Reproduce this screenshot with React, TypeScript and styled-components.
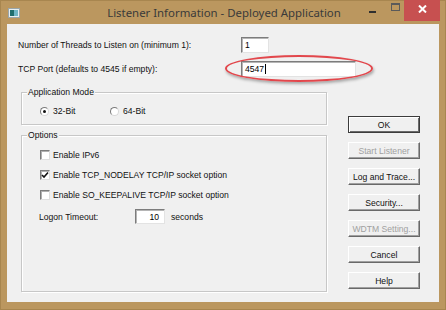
import React from "react";
import styled, { createGlobalStyle, css } from "styled-components";

const Global = createGlobalStyle`
  html, body { margin: 0; padding: 0; background: #bb975f; }
  body { width: 446px; height: 310px; overflow: hidden; }
`;

const Window = styled.div`
  box-sizing: border-box;
  width: 446px;
  height: 310px;
  background: #bb975f;
  border: 1px solid #a8864f;
  display: flex;
  flex-direction: column;
  font-family: "Liberation Sans", Arial, sans-serif;
`;

const TitleBar = styled.div`
  height: 23px;
  display: grid;
  grid-template-columns: 1fr auto 1fr;
  align-items: start;
  padding: 0 5px 0 7px;
`;

const AppIcon = styled.svg`
  margin-top: 7px;
  display: block;
`;

const Title = styled.div`
  font-family: "Noto Sans", "Liberation Sans", sans-serif;
  font-size: 11.4px;
  line-height: 24px;
  color: #3a3a3a;
  white-space: nowrap;
`;

const Controls = styled.div`
  display: flex;
  justify-content: flex-end;
`;

const CtrlButton = styled.div<{ $w: number; $close?: boolean }>`
  width: ${(p) => p.$w}px;
  height: 20px;
  display: flex;
  align-items: center;
  justify-content: center;
  ${(p) =>
    p.$close &&
    css`
      background: #c75050;
      margin-top: -1px;
      height: 21px;
    `}
`;

const MinGlyph = styled.span`
  width: 7px;
  height: 2px;
  background: #2f2f2f;
  margin-top: 2px;
`;

const MaxGlyph = styled.span`
  box-sizing: border-box;
  width: 9px;
  height: 8px;
  border: 1px solid #5a5a5a;
  border-top-width: 2px;
  margin-top: -8px;
`;

const Client = styled.div`
  flex: 1;
  margin: 0 6px 7px;
  background: #f0f0f0;
  color: #111;
  font-size: 8.6px;
  display: flex;
  flex-direction: column;
`;

const TopForm = styled.div`
  display: grid;
  grid-template-columns: 223px auto;
  grid-auto-rows: 16px;
  row-gap: 8px;
  padding: 13px 0 0 11px;
  align-items: center;
`;

const Label = styled.span`
  white-space: nowrap;
`;

const Field = styled.div<{ $w: number; $h?: number; $right?: boolean }>`
  box-sizing: border-box;
  position: relative;
  width: ${(p) => p.$w}px;
  height: ${(p) => p.$h ?? 16}px;
  background: #fff;
  border: 1px solid;
  border-color: #7c7c7c #e3e3e3 #e3e3e3 #7c7c7c;
  box-shadow: inset 1px 1px 0 #b5b5b5;
  display: flex;
  align-items: center;
  justify-content: ${(p) => (p.$right ? "flex-end" : "flex-start")};
  padding: ${(p) => (p.$right ? "0 5px 0 0" : "0 0 0 3px")};
  color: #000;
`;

const Caret = styled.span`
  width: 1px;
  height: 10px;
  background: #000;
  margin-left: 0.5px;
`;

const Highlight = styled.span`
  position: absolute;
  left: -17px;
  top: -7px;
  width: 148px;
  height: 27px;
  box-sizing: border-box;
  border: 2.5px solid #e2474c;
  border-radius: 50%;
  box-shadow: 1px 2px 3px rgba(0, 0, 0, 0.3);
  pointer-events: none;
`;

const Lower = styled.div`
  display: flex;
  align-items: flex-start;
  gap: 21px;
  margin-top: 10px;
  padding-left: 14px;
`;

const LeftCol = styled.div`
  display: flex;
  flex-direction: column;
  gap: 5px;
  width: 306px;
`;

const Group = styled.fieldset`
  box-sizing: border-box;
  margin: 0;
  padding: 0;
  min-inline-size: 0;
  width: 306px;
  border: 1px solid #c7c7c7;
  box-shadow: inset 1px 1px 0 #fff, 1px 1px 0 #fff;
`;

const GroupTitle = styled.legend`
  font-size: 8.6px;
  line-height: 11px;
  padding: 0 1px;
  margin-left: 5px;
  background: #f0f0f0;
`;

const GroupBody = styled.div<{ $pt: number; $pb: number }>`
  display: flex;
  flex-direction: column;
  gap: 8px;
  padding: ${(p) => `${p.$pt}px 0 ${p.$pb}px 18px`};
`;

const RadioRow = styled.div`
  display: grid;
  grid-template-columns: 70px 70px;
  height: 10px;
  align-items: center;
`;

const Choice = styled.label<{ $gap: number }>`
  display: flex;
  align-items: center;
  gap: ${(p) => p.$gap}px;
  height: 12px;
  white-space: nowrap;
`;

const RadioDot = styled.span<{ $on?: boolean }>`
  box-sizing: border-box;
  width: 9px;
  height: 9px;
  border-radius: 50%;
  border: 1px solid;
  border-color: #7a7a7a #d8d8d8 #d8d8d8 #7a7a7a;
  background: #fff;
  display: flex;
  align-items: center;
  justify-content: center;
  &::after {
    content: "";
    width: 3px;
    height: 3px;
    border-radius: 50%;
    background: ${(p) => (p.$on ? "#111" : "transparent")};
  }
`;

const CheckBox = styled.span`
  box-sizing: border-box;
  width: 10px;
  height: 10px;
  border: 1px solid;
  border-color: #7c7c7c #dedede #dedede #7c7c7c;
  box-shadow: inset 1px 1px 0 #b0b0b0;
  background: #fff;
  display: flex;
  align-items: center;
  justify-content: center;
`;

const TimeoutRow = styled.div`
  display: flex;
  align-items: center;
  height: 15px;
  margin-left: -1px;
`;

const TimeoutLabel = styled.span`
  width: 96px;
`;

const Unit = styled.span`
  margin-left: 6px;
`;

const Buttons = styled.div`
  display: flex;
  flex-direction: column;
  gap: 9px;
  margin-top: 29px;
`;

const Button = styled.button<{ $default?: boolean }>`
  box-sizing: border-box;
  width: 72px;
  height: 17px;
  padding: 0;
  font-family: "Liberation Sans", Arial, sans-serif;
  font-size: 8.6px;
  color: #111;
  background: #f0f0f0;
  border: 1px solid;
  border-color: #fff #696969 #696969 #fff;
  box-shadow: inset -1px -1px 0 #a0a0a0;
  ${(p) =>
    p.$default &&
    css`
      border-color: #3c3c3c;
      box-shadow: inset 1px 1px 0 #fff, inset -1px -1px 0 #6a6a6a;
    `}
  &:disabled {
    color: #a0a0a0;
  }
`;

const Check = () => (
  <svg width="8" height="8" viewBox="0 0 8 8">
    <path d="M1 4 L3 6 L7 1.5" fill="none" stroke="#111" strokeWidth="1.6" />
  </svg>
);

export default function App() {
  return (
    <>
      <Global />
      <Window>
        <TitleBar>
          <AppIcon width="12" height="10" viewBox="0 0 12 10">
            <rect x="0.5" y="0.5" width="11" height="9" fill="#e8eef0" stroke="#9aa6aa" />
            <rect x="2" y="2" width="4" height="6" fill="#1f6e6e" />
            <rect x="6" y="2" width="4" height="6" fill="#6fb6c6" />
          </AppIcon>
          <Title>Listener Information - Deployed Application</Title>
          <Controls>
            <CtrlButton $w={28}>
              <MinGlyph />
            </CtrlButton>
            <CtrlButton $w={18}>
              <MaxGlyph />
            </CtrlButton>
            <CtrlButton $w={36} $close>
              <svg width="9" height="8" viewBox="0 0 9 8" style={{ marginTop: -4 }}>
                <path d="M1 0.5 L8 7.5 M8 0.5 L1 7.5" stroke="#fff" strokeWidth="2" />
              </svg>
            </CtrlButton>
          </Controls>
        </TitleBar>
        <Client>
          <TopForm>
            <Label>Number of Threads to Listen on (minimum 1):</Label>
            <Field $w={28}>1</Field>
            <Label>TCP Port (defaults to 4545 if empty):</Label>
            <Field $w={115}>
              4547
              <Caret />
              <Highlight />
            </Field>
          </TopForm>
          <Lower>
            <LeftCol>
              <Group>
                <GroupTitle>Application Mode</GroupTitle>
                <GroupBody $pt={7} $pb={9}>
                  <RadioRow>
                    <Choice $gap={4}>
                      <RadioDot $on />
                      32-Bit
                    </Choice>
                    <Choice $gap={4}>
                      <RadioDot />
                      64-Bit
                    </Choice>
                  </RadioRow>
                </GroupBody>
              </Group>
              <Group>
                <GroupTitle>Options</GroupTitle>
                <GroupBody $pt={8} $pb={67}>
                  <Choice $gap={3}>
                    <CheckBox />
                    Enable IPv6
                  </Choice>
                  <Choice $gap={3}>
                    <CheckBox>
                      <Check />
                    </CheckBox>
                    Enable TCP_NODELAY TCP/IP socket option
                  </Choice>
                  <Choice $gap={3}>
                    <CheckBox />
                    Enable SO_KEEPALIVE TCP/IP socket option
                  </Choice>
                  <TimeoutRow>
                    <TimeoutLabel>Logon Timeout:</TimeoutLabel>
                    <Field $w={30} $h={15} $right>
                      10
                    </Field>
                    <Unit>seconds</Unit>
                  </TimeoutRow>
                </GroupBody>
              </Group>
            </LeftCol>
            <Buttons>
              <Button $default>OK</Button>
              <Button disabled>Start Listener</Button>
              <Button>Log and Trace...</Button>
              <Button>Security...</Button>
              <Button disabled>WDTM Setting...</Button>
              <Button>Cancel</Button>
              <Button>Help</Button>
            </Buttons>
          </Lower>
        </Client>
      </Window>
    </>
  );
}
